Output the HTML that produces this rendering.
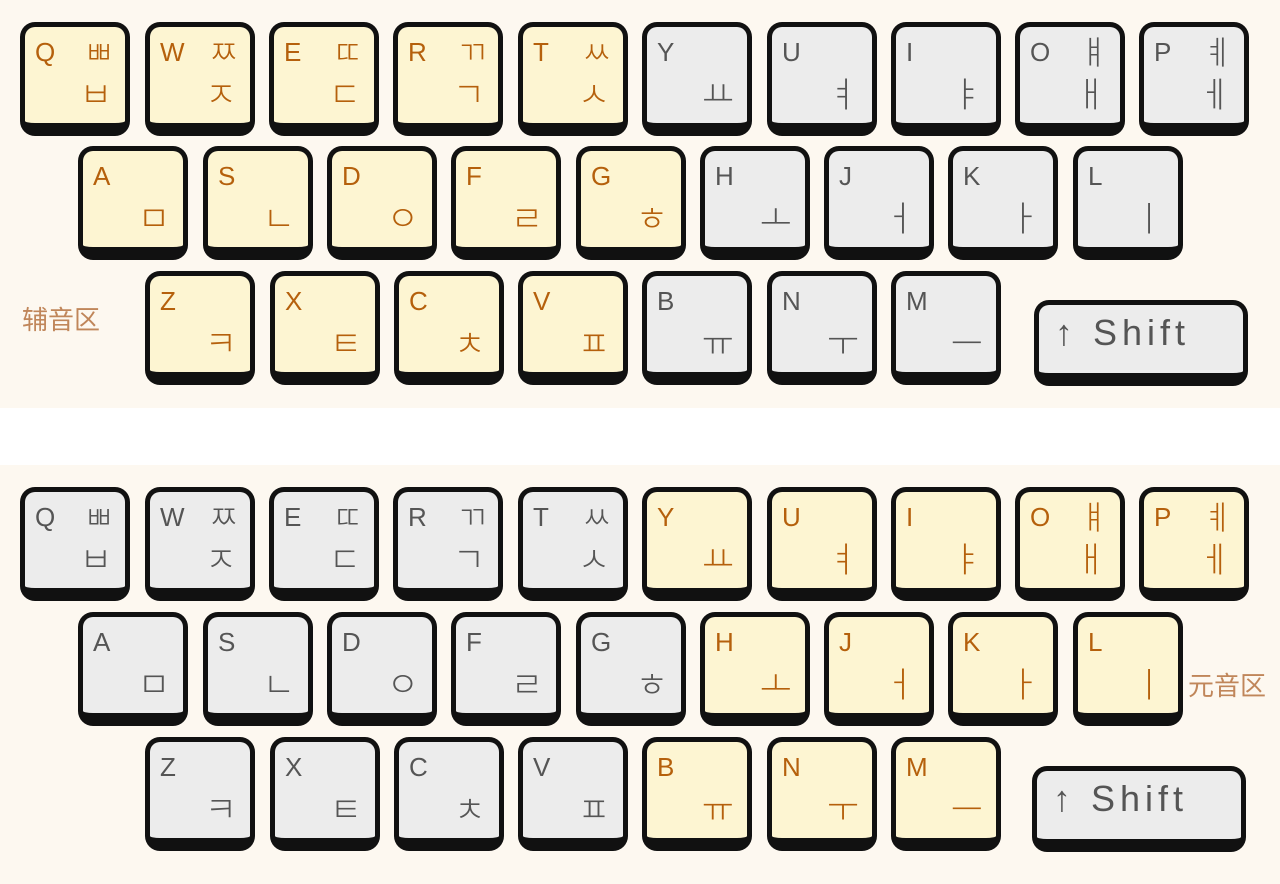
<!DOCTYPE html>
<html><head><meta charset="utf-8"><style>
*{margin:0;padding:0;box-sizing:border-box}
body{width:1280px;height:884px;background:#fff;position:relative;overflow:hidden;font-family:"Liberation Sans","Noto Sans CJK KR",sans-serif}
.p{position:absolute;left:0;width:1280px;background:#fdf8f0}
.k{position:absolute;width:110px;height:114px;border:5px solid #111;border-bottom-width:13px;border-radius:15px;background:#ececec;color:#555}
.k.y{background:#fdf5d2;color:#b5600c}
.l{position:absolute;left:10px;top:12px;font-size:26px;line-height:1}
.s{position:absolute;right:11px;top:4px;font-size:33px;line-height:1.2;font-weight:300;font-family:"Noto Sans CJK KR",sans-serif}
.h{position:absolute;right:13px;top:45px;font-size:35px;line-height:1.2;font-weight:300;font-family:"Noto Sans CJK KR",sans-serif}
.sh{position:absolute;width:214px;height:86px;border:5px solid #111;border-bottom-width:13px;border-radius:15px;background:#ececec;color:#555;font-size:36px;padding:10px 0 0 16px;letter-spacing:5px;line-height:1}
.lab{position:absolute;font-size:26px;color:#c0865a;font-family:"Liberation Sans","Noto Sans CJK SC",sans-serif}
</style></head><body>
<div class="p" style="top:0;height:408px"></div>
<div class="p" style="top:465px;height:419px"></div>
<div class="lab" style="left:22px;top:300px">辅音区</div>
<div class="lab" style="left:1188px;top:666px">元音区</div>

<!-- panel 1 -->
<div class="k y" style="left:20px;top:22px"><span class="l">Q</span><span class="s">ㅃ</span><span class="h">ㅂ</span></div>
<div class="k y" style="left:145px;top:22px"><span class="l">W</span><span class="s">ㅉ</span><span class="h">ㅈ</span></div>
<div class="k y" style="left:269px;top:22px"><span class="l">E</span><span class="s">ㄸ</span><span class="h">ㄷ</span></div>
<div class="k y" style="left:393px;top:22px"><span class="l">R</span><span class="s">ㄲ</span><span class="h">ㄱ</span></div>
<div class="k y" style="left:518px;top:22px"><span class="l">T</span><span class="s">ㅆ</span><span class="h">ㅅ</span></div>
<div class="k" style="left:642px;top:22px"><span class="l">Y</span><span class="h">ㅛ</span></div>
<div class="k" style="left:767px;top:22px"><span class="l">U</span><span class="h">ㅕ</span></div>
<div class="k" style="left:891px;top:22px"><span class="l">I</span><span class="h">ㅑ</span></div>
<div class="k" style="left:1015px;top:22px"><span class="l">O</span><span class="s">ㅒ</span><span class="h">ㅐ</span></div>
<div class="k" style="left:1139px;top:22px"><span class="l">P</span><span class="s">ㅖ</span><span class="h">ㅔ</span></div>

<div class="k y" style="left:78px;top:146px"><span class="l">A</span><span class="h">ㅁ</span></div>
<div class="k y" style="left:203px;top:146px"><span class="l">S</span><span class="h">ㄴ</span></div>
<div class="k y" style="left:327px;top:146px"><span class="l">D</span><span class="h">ㅇ</span></div>
<div class="k y" style="left:451px;top:146px"><span class="l">F</span><span class="h">ㄹ</span></div>
<div class="k y" style="left:576px;top:146px"><span class="l">G</span><span class="h">ㅎ</span></div>
<div class="k" style="left:700px;top:146px"><span class="l">H</span><span class="h">ㅗ</span></div>
<div class="k" style="left:824px;top:146px"><span class="l">J</span><span class="h">ㅓ</span></div>
<div class="k" style="left:948px;top:146px"><span class="l">K</span><span class="h">ㅏ</span></div>
<div class="k" style="left:1073px;top:146px"><span class="l">L</span><span class="h">ㅣ</span></div>

<div class="k y" style="left:145px;top:271px"><span class="l">Z</span><span class="h">ㅋ</span></div>
<div class="k y" style="left:270px;top:271px"><span class="l">X</span><span class="h">ㅌ</span></div>
<div class="k y" style="left:394px;top:271px"><span class="l">C</span><span class="h">ㅊ</span></div>
<div class="k y" style="left:518px;top:271px"><span class="l">V</span><span class="h">ㅍ</span></div>
<div class="k" style="left:642px;top:271px"><span class="l">B</span><span class="h">ㅠ</span></div>
<div class="k" style="left:767px;top:271px"><span class="l">N</span><span class="h">ㅜ</span></div>
<div class="k" style="left:891px;top:271px"><span class="l">M</span><span class="h">ㅡ</span></div>
<div class="sh" style="left:1034px;top:300px">↑ Shift</div>

<!-- panel 2 -->
<div class="k" style="left:20px;top:487px"><span class="l">Q</span><span class="s">ㅃ</span><span class="h">ㅂ</span></div>
<div class="k" style="left:145px;top:487px"><span class="l">W</span><span class="s">ㅉ</span><span class="h">ㅈ</span></div>
<div class="k" style="left:269px;top:487px"><span class="l">E</span><span class="s">ㄸ</span><span class="h">ㄷ</span></div>
<div class="k" style="left:393px;top:487px"><span class="l">R</span><span class="s">ㄲ</span><span class="h">ㄱ</span></div>
<div class="k" style="left:518px;top:487px"><span class="l">T</span><span class="s">ㅆ</span><span class="h">ㅅ</span></div>
<div class="k y" style="left:642px;top:487px"><span class="l">Y</span><span class="h">ㅛ</span></div>
<div class="k y" style="left:767px;top:487px"><span class="l">U</span><span class="h">ㅕ</span></div>
<div class="k y" style="left:891px;top:487px"><span class="l">I</span><span class="h">ㅑ</span></div>
<div class="k y" style="left:1015px;top:487px"><span class="l">O</span><span class="s">ㅒ</span><span class="h">ㅐ</span></div>
<div class="k y" style="left:1139px;top:487px"><span class="l">P</span><span class="s">ㅖ</span><span class="h">ㅔ</span></div>

<div class="k" style="left:78px;top:612px"><span class="l">A</span><span class="h">ㅁ</span></div>
<div class="k" style="left:203px;top:612px"><span class="l">S</span><span class="h">ㄴ</span></div>
<div class="k" style="left:327px;top:612px"><span class="l">D</span><span class="h">ㅇ</span></div>
<div class="k" style="left:451px;top:612px"><span class="l">F</span><span class="h">ㄹ</span></div>
<div class="k" style="left:576px;top:612px"><span class="l">G</span><span class="h">ㅎ</span></div>
<div class="k y" style="left:700px;top:612px"><span class="l">H</span><span class="h">ㅗ</span></div>
<div class="k y" style="left:824px;top:612px"><span class="l">J</span><span class="h">ㅓ</span></div>
<div class="k y" style="left:948px;top:612px"><span class="l">K</span><span class="h">ㅏ</span></div>
<div class="k y" style="left:1073px;top:612px"><span class="l">L</span><span class="h">ㅣ</span></div>

<div class="k" style="left:145px;top:737px"><span class="l">Z</span><span class="h">ㅋ</span></div>
<div class="k" style="left:270px;top:737px"><span class="l">X</span><span class="h">ㅌ</span></div>
<div class="k" style="left:394px;top:737px"><span class="l">C</span><span class="h">ㅊ</span></div>
<div class="k" style="left:518px;top:737px"><span class="l">V</span><span class="h">ㅍ</span></div>
<div class="k y" style="left:642px;top:737px"><span class="l">B</span><span class="h">ㅠ</span></div>
<div class="k y" style="left:767px;top:737px"><span class="l">N</span><span class="h">ㅜ</span></div>
<div class="k y" style="left:891px;top:737px"><span class="l">M</span><span class="h">ㅡ</span></div>
<div class="sh" style="left:1032px;top:766px">↑ Shift</div>
</body></html>
